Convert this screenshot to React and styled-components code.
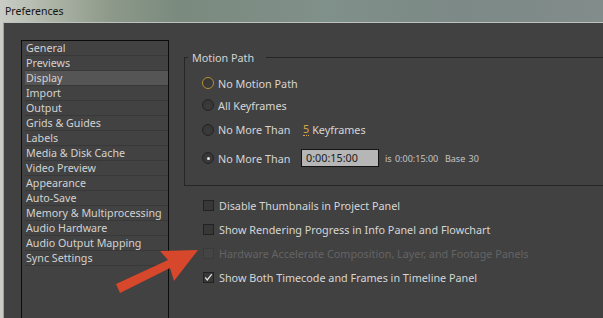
import styled, { createGlobalStyle } from "styled-components";

const GlobalStyle = createGlobalStyle`
  html, body {
    margin: 0;
    padding: 0;
    overflow: hidden;
  }
  body {
    font-family: "Noto Sans", "DejaVu Sans", sans-serif;
  }
`;

const Screen = styled.div`
  position: relative;
  width: 603px;
  height: 318px;
  overflow: hidden;
  display: flex;
  flex-direction: column;
  background: linear-gradient(90deg, #c9cdc6 0px, #b3baad 40px, #8d998a 110px, #7a8a7e 180px, #80908a 320px, #7c8986 460px, #828c8b 603px);
`;

const TitleBar = styled.div`
  height: 22px;
  flex: none;
  display: flex;
  align-items: center;
  padding-left: 5px;
  font-size: 10.5px;
  color: #151515;
`;

const Body = styled.div`
  flex: 1;
  display: flex;
  margin-left: 3px;
  padding: 17px 0 0 17px;
  background: #414141;
  border-top: 1px solid #bcc3bf;
  border-left: 1px solid #9aa39f;
  min-height: 0;
`;

const Sidebar = styled.ul`
  list-style: none;
  margin: 0 0 -20px 0;
  padding: 0 0 0 3px;
  width: 143px;
  flex: none;
  border: 1px solid #0c0c0c;
  border-bottom: none;
  background: #424242;
`;

const Item = styled.li`
  height: 14px;
  line-height: 15px;
  padding-left: 1px;
  border-bottom: 1px solid #383838;
  font-size: 10.7px;
  color: #d2d2d2;
  white-space: nowrap;
  background: ${(p) => (p.$active ? "#555555" : "transparent")};
`;

const Main = styled.div`
  flex: 1;
  padding: 10px 0 0 15px;
  display: flex;
  flex-direction: column;
`;

const Group = styled.fieldset`
  margin: 0;
  padding: 0;
  border: 1px solid #262626;
  border-right: none;
  height: 136px;
  box-sizing: border-box;
`;

const Legend = styled.legend`
  margin-left: 3px;
  padding: 0 12px 0 4px;
  font-size: 10.8px;
  color: #d4d4d4;
`;

const Radios = styled.div`
  display: flex;
  flex-direction: column;
  padding: 7px 0 0 17px;
`;

const RadioRow = styled.div`
  display: flex;
  align-items: center;
  height: ${(p) => p.$h}px;
  font-size: 10.8px;
  color: #d6d6d6;
`;

const RadioDot = styled.span`
  width: 12px;
  height: 12px;
  box-sizing: border-box;
  border-radius: 50%;
  flex: none;
  margin-right: 4px;
  border: 1px solid ${(p) => (p.$focus ? "#b8912e" : "#242424")};
  background: radial-gradient(circle at 50% 60%, #3c3c3c 0%, #363636 70%, #2e2e2e 100%);
  display: flex;
  align-items: center;
  justify-content: center;
  &::after {
    content: "";
    width: 3px;
    height: 3px;
    border-radius: 50%;
    background: ${(p) => (p.$checked ? "#e8e8e8" : "transparent")};
  }
`;

const RadioLabel = styled.span`
  width: ${(p) => (p.$wide ? "83px" : "auto")};
  flex: none;
`;

const HotNumber = styled.span`
  color: #d7a640;
  border-bottom: 1px dotted #d7a640;
  line-height: 12px;
  margin-right: 3px;
  margin-left: 2px;
`;

const TimeInput = styled.div`
  width: 78px;
  height: 18px;
  box-sizing: border-box;
  border: 1px solid #141414;
  background: #b6b6b6;
  color: #1c1c1c;
  font-size: 10.8px;
  line-height: 16px;
  padding-left: 4px;
`;

const Note = styled.span`
  margin-left: 6px;
  font-size: 9px;
  color: #c4c4c4;
  word-spacing: 1px;
`;

const Checks = styled.div`
  display: flex;
  flex-direction: column;
  padding: 7px 0 0 19px;
`;

const CheckRow = styled.div`
  display: flex;
  align-items: center;
  height: 24px;
  font-size: 10.8px;
  color: ${(p) => (p.$disabled ? "#646464" : "#d6d6d6")};
`;

const Box = styled.span`
  width: 11px;
  height: 11px;
  box-sizing: border-box;
  flex: none;
  margin-right: 5px;
  border: 1px solid ${(p) => (p.$disabled ? "#3a3a3a" : "#222222")};
  background: ${(p) => (p.$disabled ? "#444444" : "#383838")};
  display: flex;
  align-items: center;
  justify-content: center;
`;

const Arrow = styled.svg`
  position: absolute;
  left: 0;
  top: 0;
  pointer-events: none;
`;

const sections = [
  "General",
  "Previews",
  "Display",
  "Import",
  "Output",
  "Grids & Guides",
  "Labels",
  "Media & Disk Cache",
  "Video Preview",
  "Appearance",
  "Auto-Save",
  "Memory & Multiprocessing",
  "Audio Hardware",
  "Audio Output Mapping",
  "Sync Settings",
];

const checks = [
  { label: "Disable Thumbnails in Project Panel" },
  { label: "Show Rendering Progress in Info Panel and Flowchart" },
  { label: "Hardware Accelerate Composition, Layer, and Footage Panels", disabled: true },
  { label: "Show Both Timecode and Frames in Timeline Panel", checked: true },
];

const Tick = () => (
  <svg width="11" height="11" viewBox="0 0 11 11">
    <path d="M1.5 5.5 L4 8.5 L9.5 1.5" fill="none" stroke="#e6e6e6" strokeWidth="1.5" />
  </svg>
);

const App = () => {
  return (
    <Screen>
      <GlobalStyle />
      <TitleBar>Preferences</TitleBar>
      <Body>
        <Sidebar>
          {sections.map((s) => (
            <Item key={s} $active={s === "Display"}>
              {s}
            </Item>
          ))}
        </Sidebar>
        <Main>
          <Group>
            <Legend>Motion Path</Legend>
            <Radios>
              <RadioRow $h={22}>
                <RadioDot $focus />
                <RadioLabel>No Motion Path</RadioLabel>
              </RadioRow>
              <RadioRow $h={22}>
                <RadioDot />
                <RadioLabel>All Keyframes</RadioLabel>
              </RadioRow>
              <RadioRow $h={27}>
                <RadioDot />
                <RadioLabel $wide>No More Than</RadioLabel>
                <HotNumber>5</HotNumber>
                <span>Keyframes</span>
              </RadioRow>
              <RadioRow $h={30}>
                <RadioDot $checked />
                <RadioLabel $wide>No More Than</RadioLabel>
                <TimeInput>0:00:15:00</TimeInput>
                <Note>is 0:00:15:00&nbsp; Base 30</Note>
              </RadioRow>
            </Radios>
          </Group>
          <Checks>
            {checks.map((c) => (
              <CheckRow key={c.label} $disabled={c.disabled}>
                <Box $disabled={c.disabled}>{c.checked && <Tick />}</Box>
                {c.label}
              </CheckRow>
            ))}
          </Checks>
        </Main>
      </Body>
      <Arrow width="603" height="318" viewBox="0 0 603 318">
        <polygon
          points="116,284 168,260 160,251 198,250 174,281 170,268 120,293"
          fill="#d6472b"
        />
      </Arrow>
    </Screen>
  );
};

export default App;
